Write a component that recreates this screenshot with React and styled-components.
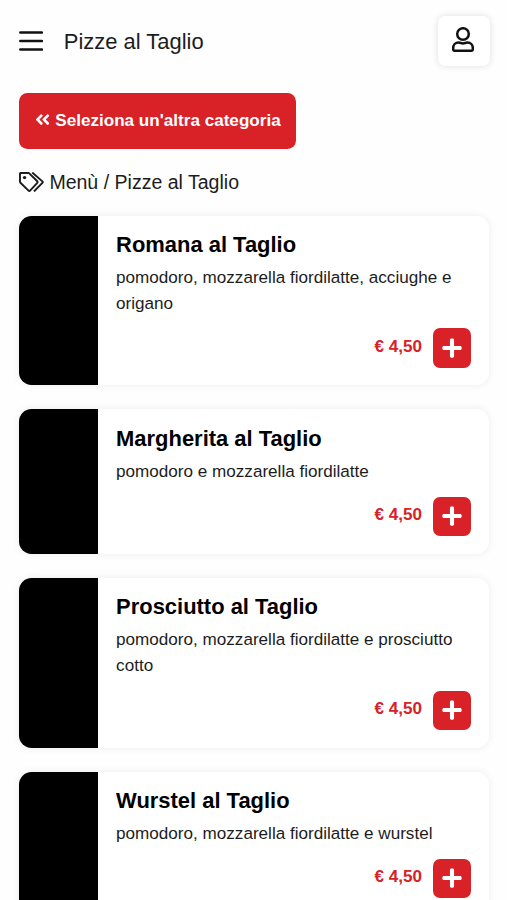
import React from 'react';
import { FaAngleDoubleLeft, FaPlus } from 'react-icons/fa';
import styled, { createGlobalStyle } from 'styled-components';

// Sample menu data (replace with real API data)
const pizzas = [
  {
    id: 1,
    name: 'Romana al Taglio',
    description: 'pomodoro, mozzarella fiordilatte, acciughe e origano',
    price: '4,50',
  },
  {
    id: 2,
    name: 'Margherita al Taglio',
    description: 'pomodoro e mozzarella fiordilatte',
    price: '4,50',
  },
  {
    id: 3,
    name: 'Prosciutto al Taglio',
    description: 'pomodoro, mozzarella fiordilatte e prosciutto cotto',
    price: '4,50',
  },
  {
    id: 4,
    name: 'Wurstel al Taglio',
    description: 'pomodoro, mozzarella fiordilatte e wurstel',
    price: '4,50',
  },
];

const GlobalStyle = createGlobalStyle`
  * {
    box-sizing: border-box;
  }

  body {
    margin: 0;
    background-color: #fefefe;
    color: #1c1c1c;
    font-family: 'Liberation Sans', Arial, sans-serif;
    font-size: 17.1px;
  }

  button {
    border: none;
    font: inherit;
    cursor: pointer;
  }
`;

const Page = styled.div`
  height: 100vh;
  overflow: hidden;
  padding: 15px 17.5px 0 19.4px;
`;

const Header = styled.header`
  display: flex;
  align-items: center;
  height: 51px;
`;

const MenuButton = styled.button`
  display: flex;
  padding: 0;
  background: none;
  color: #111;
`;

const HeaderTitle = styled.h1`
  flex: 1;
  margin: 2px 0 0 20.4px;
  font-size: 21.95px;
  font-weight: normal;
  line-height: 30px;
`;

const UserButton = styled.button`
  display: flex;
  align-items: center;
  justify-content: center;
  width: 52px;
  height: 50px;
  padding: 0 1px 2px 0;
  border-radius: 7px;
  background-color: #fff;
  box-shadow: 0 0 7px rgba(0, 0, 0, 0.13);
  color: #111;
`;

const CategoryButton = styled.button`
  display: flex;
  align-items: center;
  gap: 4.6px;
  width: 277px;
  height: 56px;
  margin-top: 26.6px;
  padding: 0 0 2px 14.2px;
  border-radius: 8.5px;
  background-color: #d92128;
  color: #fff;
  font-weight: bold;
  white-space: nowrap;

  span {
    padding-top: 2px;
  }
`;

const Breadcrumb = styled.nav`
  display: flex;
  align-items: center;
  gap: 5.2px;
  height: 26px;
  margin-top: 20.8px;
  font-size: 19.55px;
`;

const MenuList = styled.main`
  display: flex;
  flex-direction: column;
  gap: 24px;
  margin-top: 20.2px;
`;

const Card = styled.article`
  display: flex;
  flex-shrink: 0;
  width: 470px;
  border-radius: 12.5px;
  overflow: hidden;
  background-color: #fff;
  box-shadow: 0 0 9px rgba(0, 0, 0, 0.07);
`;

const CardImage = styled.div`
  width: 78.5px;
  flex-shrink: 0;
  background-color: #000;
`;

const CardBody = styled.div`
  flex: 1;
  display: flex;
  flex-direction: column;
  padding: 15.8px 18px 17.8px 18.2px;
`;

const CardTitle = styled.h2`
  margin: 0;
  color: #000;
  font-size: 21.95px;
  line-height: 27.5px;
`;

const CardText = styled.p`
  margin: 6.3px 0 0;
  line-height: 25.7px;
`;

const CardFooter = styled.div`
  display: flex;
  align-items: center;
  justify-content: flex-end;
  gap: 11px;
  margin-top: 11.9px;
`;

const Price = styled.span`
  padding-bottom: 2.6px;
  color: #d92128;
  font-weight: bold;
`;

const AddButton = styled.button`
  display: flex;
  align-items: center;
  justify-content: center;
  width: 38.4px;
  height: 39.2px;
  padding: 0;
  border-radius: 7px;
  background-color: #d92128;
  color: #fff;
  font-size: 22px;
`;

const BarsIcon = () => (
  <svg width="24" height="22" viewBox="0 0 24 22" stroke="currentColor" strokeWidth="2.7" strokeLinecap="round">
    <path d="M1.4 2.5h21.4M1.4 11h21.4M1.4 19.5h21.4" />
  </svg>
);

const UserIcon = () => (
  <svg width="22" height="25" viewBox="0 0 22 25" fill="none" stroke="currentColor" strokeWidth="2.5" strokeLinejoin="round">
    <circle cx="11" cy="7" r="5.8" />
    <path d="M6.6 15.6c1.9 0 2.5.8 4.4.8s2.5-.8 4.4-.8c3.2 0 5.4 2.3 5.4 5.3v1.4c0 .9-.6 1.5-1.5 1.5H2.7c-.9 0-1.5-.6-1.5-1.5v-1.4c0-3 2.2-5.3 5.4-5.3z" />
  </svg>
);

const TagsIcon = () => (
  <svg width="24.8" height="20" viewBox="0 0 640 516" fill="none" stroke="currentColor" strokeWidth="50" strokeLinejoin="round">
    <path d="M25 52a28 28 0 0 1 28-28h182a40 40 0 0 1 29 12L472 240a28 28 0 0 1 0 40L286 480a28 28 0 0 1-40 0L37 276a40 40 0 0 1-12-29z" />
    <path d="M342 14l262 228a27 27 0 0 1 0 38L386 502" />
    <circle cx="144" cy="144" r="44" fill="currentColor" stroke="none" />
  </svg>
);

const App = () => {
  return (
    <>
      <GlobalStyle />
      <Page>
        <Header>
          <MenuButton aria-label="Apri menù">
            <BarsIcon />
          </MenuButton>
          <HeaderTitle>Pizze al Taglio</HeaderTitle>
          <UserButton aria-label="Account">
            <UserIcon />
          </UserButton>
        </Header>
        <CategoryButton>
          <FaAngleDoubleLeft />
          <span>Seleziona un'altra categoria</span>
        </CategoryButton>
        <Breadcrumb>
          <TagsIcon />
          <span>Menù / Pizze al Taglio</span>
        </Breadcrumb>
        <MenuList>
          {pizzas.map((pizza) => (
            <Card key={pizza.id}>
              <CardImage />
              <CardBody>
                <CardTitle>{pizza.name}</CardTitle>
                <CardText>{pizza.description}</CardText>
                <CardFooter>
                  <Price>€ {pizza.price}</Price>
                  <AddButton aria-label={`Aggiungi ${pizza.name}`}>
                    <FaPlus />
                  </AddButton>
                </CardFooter>
              </CardBody>
            </Card>
          ))}
        </MenuList>
      </Page>
    </>
  );
};

export default App;
